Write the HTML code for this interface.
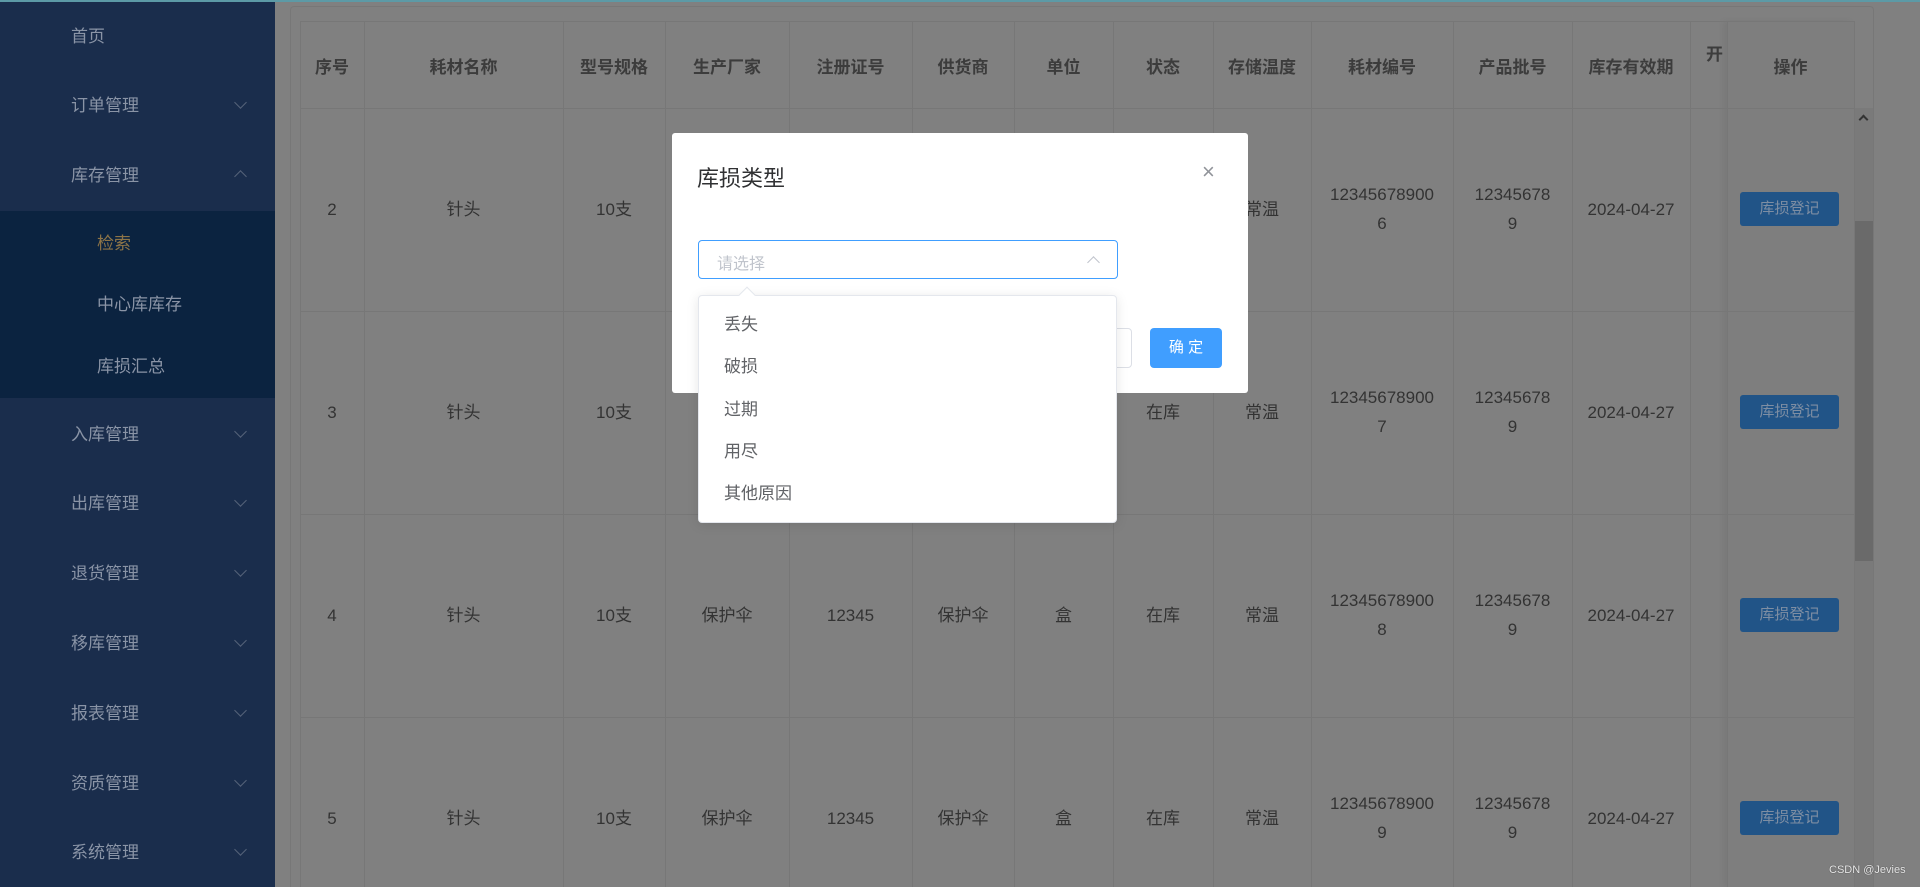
<!DOCTYPE html>
<html style="overflow:hidden;width:1920px;height:887px"><head><meta charset="utf-8">
<style>
*{margin:0;padding:0;box-sizing:border-box}
body{width:1920px;height:887px;overflow:hidden;background:#808080;font-family:"Liberation Sans","Noto Sans CJK SC",sans-serif;position:relative}
.side{position:absolute;left:0;top:0;width:275px;height:887px;background:#1a2d4c}
.sub{position:absolute;left:0;top:211px;width:275px;height:187px;background:#0b2340}
.mi{position:absolute;left:71px;font-size:17px;color:#8a94a6;line-height:20px}
.si{position:absolute;left:97px;font-size:17px;color:#8a94a6;line-height:20px}
.arr{position:absolute;left:236px;width:9px;height:9px;border-right:1px solid #56637a;border-bottom:1px solid #56637a;transform:rotate(45deg)}
.arr.up{transform:rotate(225deg)}
.topline{position:absolute;left:0;top:0;width:1920px;height:2px;background:#5c9aa6}
.box{position:absolute;left:290px;top:6px;width:1584px;height:881px;border:1px solid #777;border-bottom:none;border-radius:4px 4px 0 0}
.c{position:absolute;text-align:center;color:#333;font-size:17px;line-height:29px}
.h{position:absolute;text-align:center;color:#3c3c3c;font-size:17px;font-weight:bold}
.vl{position:absolute;top:21px;width:1px;height:866px;background:#777}
.hl{position:absolute;left:300px;width:1554px;height:1px;background:#777}
.btn{position:absolute;left:1740px;width:99px;height:34px;background:#215487;border-radius:3px;color:#7e8ea3;font-size:15px;text-align:center;line-height:34px}
.dlg{position:absolute;left:672px;top:133px;width:576px;height:260px;background:#fff;border-radius:3px}
.dd{position:absolute;left:698px;top:295px;width:419px;height:228px;background:#fff;border:1px solid #e4e7ed;border-radius:4px;box-shadow:0 2px 12px rgba(0,0,0,.1)}
.opt{position:absolute;left:25px;font-size:17px;color:#606266;line-height:20px}
</style></head><body>
<div class="side">
<div class="sub"></div>
<div class="mi" style="top:27px">首页</div>
<div class="mi" style="top:96px">订单管理</div><div class="arr" style="top:98px"></div>
<div class="mi" style="top:166px">库存管理</div><div class="arr up" style="top:172px"></div>
<div class="si" style="top:234px;color:#8d7447">检索</div>
<div class="si" style="top:295px">中心库库存</div>
<div class="si" style="top:357px">库损汇总</div>
<div class="mi" style="top:425px">入库管理</div><div class="arr" style="top:427px"></div>
<div class="mi" style="top:494px">出库管理</div><div class="arr" style="top:496px"></div>
<div class="mi" style="top:564px">退货管理</div><div class="arr" style="top:566px"></div>
<div class="mi" style="top:634px">移库管理</div><div class="arr" style="top:636px"></div>
<div class="mi" style="top:704px">报表管理</div><div class="arr" style="top:706px"></div>
<div class="mi" style="top:774px">资质管理</div><div class="arr" style="top:776px"></div>
<div class="mi" style="top:843px">系统管理</div><div class="arr" style="top:845px"></div>
</div>
<div class="topline"></div>
<div class="box"></div>
<div style="position:absolute;left:1727px;top:21px;width:127px;height:866px;background:#7e7e7e;box-shadow:-4px 0 6px rgba(0,0,0,.06)"></div>
<div style="position:absolute;left:1854px;top:108px;width:19px;height:779px;background:#7a7a7a"></div>
<div style="position:absolute;left:1854px;top:221px;width:19px;height:340px;background:#6a6a6a"></div>
<div style="position:absolute;left:1860px;top:116px;width:7px;height:7px;border-left:2px solid #333;border-top:2px solid #333;transform:rotate(45deg)"></div>
<div class="hl" style="top:21px"></div>
<div class="hl" style="top:108px"></div>
<div class="hl" style="top:311px"></div>
<div class="hl" style="top:514px"></div>
<div class="hl" style="top:717px"></div>
<div class="vl" style="left:300px"></div><div class="vl" style="left:364px"></div><div class="vl" style="left:563px"></div><div class="vl" style="left:665px"></div><div class="vl" style="left:789px"></div><div class="vl" style="left:912px"></div><div class="vl" style="left:1014px"></div><div class="vl" style="left:1113px"></div><div class="vl" style="left:1213px"></div><div class="vl" style="left:1311px"></div><div class="vl" style="left:1453px"></div><div class="vl" style="left:1572px"></div><div class="vl" style="left:1690px"></div><div class="vl" style="left:1727px"></div><div class="vl" style="left:1854px"></div>
<div class="h" style="top:53px;left:300px;width:64px">序号</div>
<div class="h" style="top:53px;left:364px;width:199px">耗材名称</div>
<div class="h" style="top:53px;left:563px;width:102px">型号规格</div>
<div class="h" style="top:53px;left:665px;width:124px">生产厂家</div>
<div class="h" style="top:53px;left:789px;width:123px">注册证号</div>
<div class="h" style="top:53px;left:912px;width:102px">供货商</div>
<div class="h" style="top:53px;left:1014px;width:99px">单位</div>
<div class="h" style="top:53px;left:1113px;width:100px">状态</div>
<div class="h" style="top:53px;left:1213px;width:98px">存储温度</div>
<div class="h" style="top:53px;left:1311px;width:142px">耗材编号</div>
<div class="h" style="top:53px;left:1453px;width:119px">产品批号</div>
<div class="h" style="top:53px;left:1572px;width:118px">库存有效期</div>
<div class="h" style="top:40px;left:1706px;width:21px;overflow:hidden;text-align:left">开</div>
<div class="h" style="top:53px;left:1727px;width:127px">操作</div>
<div id="rows"></div>
<script>
var tops=[108,311,514,717],ids=[2,3,4,5],html='';
var cols=[[300,64],[364,199,'针头'],[563,102,'10支'],[665,124,'保护伞'],[789,123,'12345'],[912,102,'保护伞'],[1014,99,'盒'],[1113,100,'在库'],[1213,98,'常温']];
for(var i=0;i<4;i++){var t=tops[i],mid=t+101;
cols.forEach(function(c,j){var v=j==0?ids[i]:c[2];html+='<div class="c" style="left:'+c[0]+'px;width:'+c[1]+'px;top:'+(mid-14)+'px">'+v+'</div>';});
html+='<div class="c" style="left:1311px;width:142px;top:'+(mid-29)+'px">12345678900<br>'+(6+i)+'</div>';
html+='<div class="c" style="left:1453px;width:119px;top:'+(mid-29)+'px">12345678<br>9</div>';
html+='<div class="c" style="left:1572px;width:118px;top:'+(mid-14)+'px">2024-04-27</div>';
html+='<div class="btn" style="top:'+(mid-17)+'px">库损登记</div>';}
document.getElementById('rows').innerHTML=html;
</script>
<div class="dlg">
<div style="position:absolute;left:25px;top:28px;font-size:22px;color:#303133">库损类型</div>
<div style="position:absolute;left:530px;top:29px;font-size:22px;color:#909399;line-height:20px;font-weight:300">×</div>
<div style="position:absolute;left:26px;top:107px;width:420px;height:39px;border:1px solid #409eff;border-radius:4px">
<div style="position:absolute;left:18px;top:9px;font-size:16px;color:#c0c4cc">请选择</div>
<div style="position:absolute;left:390px;top:17px;width:9px;height:9px;border-left:1px solid #c0c4cc;border-top:1px solid #c0c4cc;transform:rotate(45deg)"></div>
</div>
<div style="position:absolute;left:380px;top:195px;width:80px;height:40px;border:1px solid #dcdfe6;border-radius:4px"></div>
<div style="position:absolute;left:478px;top:195px;width:72px;height:40px;background:#409eff;border-radius:4px;color:#fff;font-size:15px;text-align:center;line-height:40px">确 定</div>
</div>
<div class="dd">
<div style="position:absolute;left:42px;top:-7px;width:12px;height:12px;background:#fff;border-left:1px solid #e4e7ed;border-top:1px solid #e4e7ed;transform:rotate(45deg)"></div>
<div class="opt" style="top:19px">丢失</div>
<div class="opt" style="top:61px">破损</div>
<div class="opt" style="top:104px">过期</div>
<div class="opt" style="top:146px">用尽</div>
<div class="opt" style="top:188px">其他原因</div>
</div>
<div style="position:absolute;left:1829px;top:864px;font-size:11px;color:#e8e8e8;text-shadow:0 0 1px #333">CSDN @Jevies</div>
</body></html>
